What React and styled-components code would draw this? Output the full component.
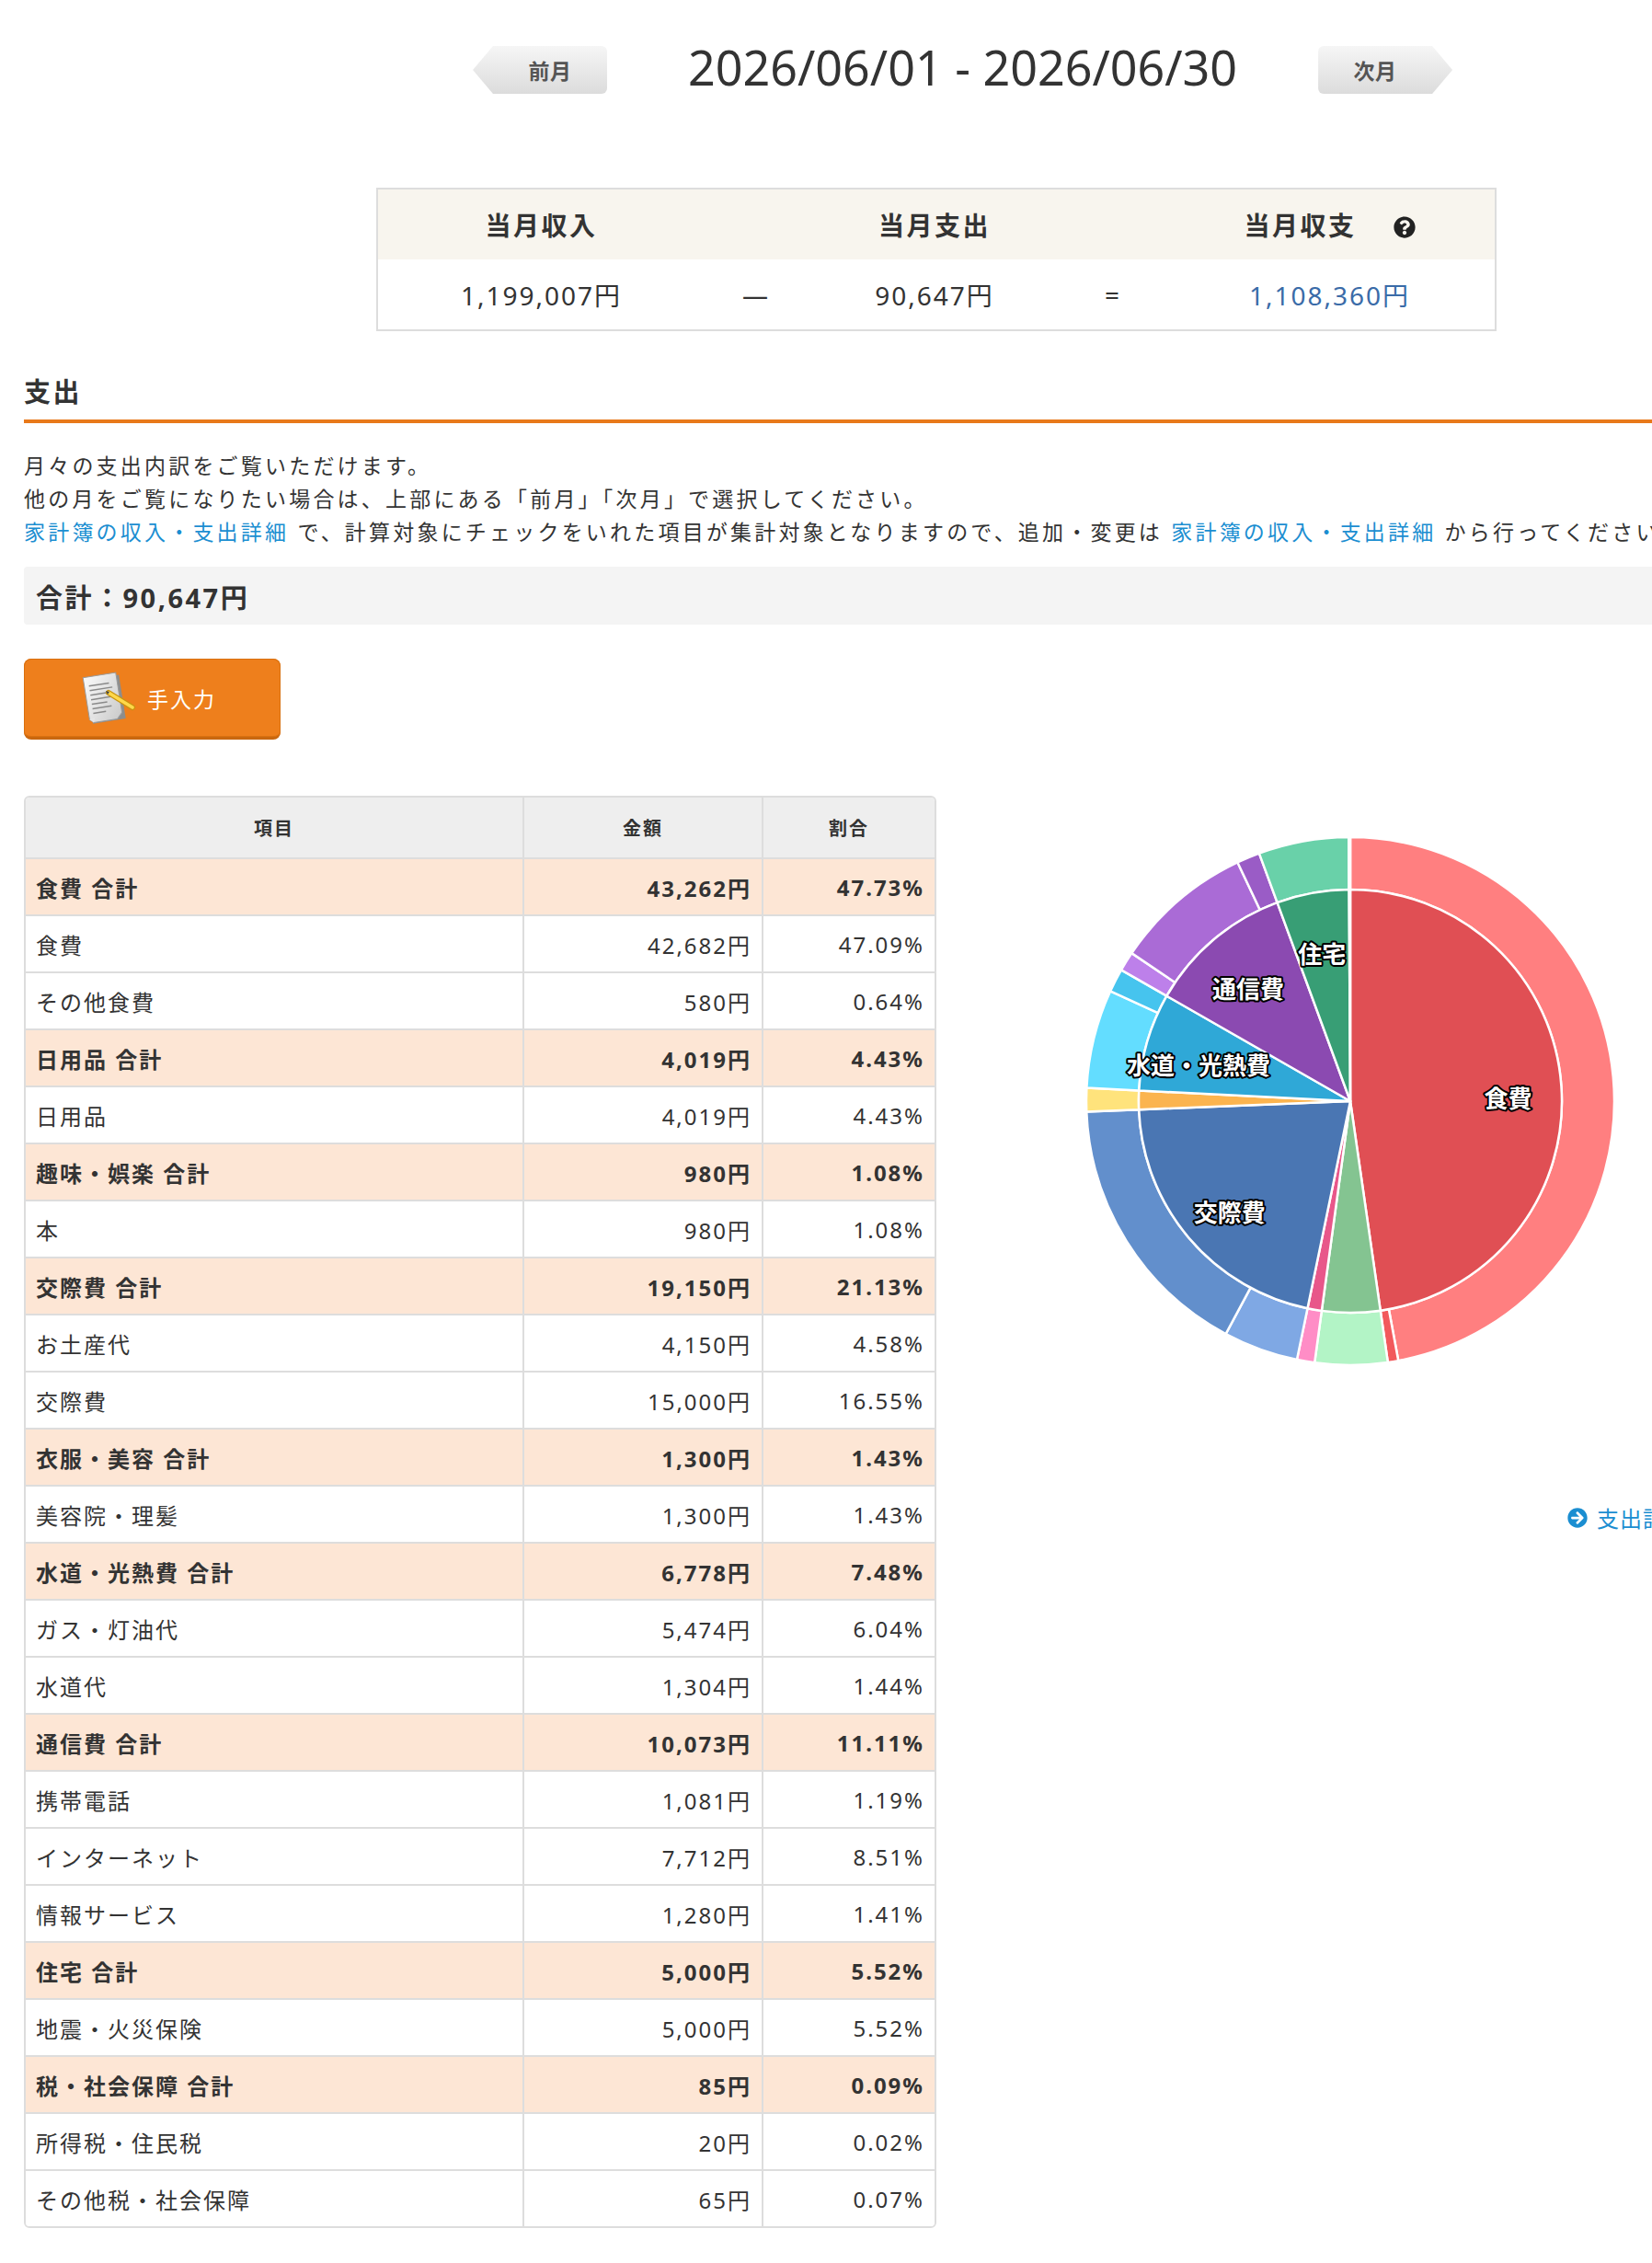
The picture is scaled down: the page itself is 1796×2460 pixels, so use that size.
import React from 'react';
import styled, { createGlobalStyle } from 'styled-components';
import { FaQuestionCircle, FaArrowCircleRight } from 'react-icons/fa';

const GlobalStyle = createGlobalStyle`
  body {
    margin: 0;
    background: #fff;
    color: #333;
    font-family: "Noto Sans", "Noto Sans CJK JP", sans-serif;
    overflow-x: hidden;
  }
`;

const groups = [
  { name: '食費', total: 43262, pct: '47.73%', color: '#e04f54', items: [
    { name: '食費', amount: 42682, pct: '47.09%', color: '#ff7f80' },
    { name: 'その他食費', amount: 580, pct: '0.64%', color: '#f2595c' },
  ] },
  { name: '日用品', total: 4019, pct: '4.43%', color: '#84c491', items: [
    { name: '日用品', amount: 4019, pct: '4.43%', color: '#b3f4c6' },
  ] },
  { name: '趣味・娯楽', total: 980, pct: '1.08%', color: '#e8578a', items: [
    { name: '本', amount: 980, pct: '1.08%', color: '#ff8dc6' },
  ] },
  { name: '交際費', total: 19150, pct: '21.13%', color: '#4a76b3', items: [
    { name: 'お土産代', amount: 4150, pct: '4.58%', color: '#7fa8e4' },
    { name: '交際費', amount: 15000, pct: '16.55%', color: '#628fcc' },
  ] },
  { name: '衣服・美容', total: 1300, pct: '1.43%', color: '#fbb44f', items: [
    { name: '美容院・理髪', amount: 1300, pct: '1.43%', color: '#ffe37c' },
  ] },
  { name: '水道・光熱費', total: 6778, pct: '7.48%', color: '#2fa8d7', items: [
    { name: 'ガス・灯油代', amount: 5474, pct: '6.04%', color: '#63ddff' },
    { name: '水道代', amount: 1304, pct: '1.44%', color: '#46c4ee' },
  ] },
  { name: '通信費', total: 10073, pct: '11.11%', color: '#8b4ab1', items: [
    { name: '携帯電話', amount: 1081, pct: '1.19%', color: '#bd80ea' },
    { name: 'インターネット', amount: 7712, pct: '8.51%', color: '#aa6bd6' },
    { name: '情報サービス', amount: 1280, pct: '1.41%', color: '#9a5cc6' },
  ] },
  { name: '住宅', total: 5000, pct: '5.52%', color: '#389e75', items: [
    { name: '地震・火災保険', amount: 5000, pct: '5.52%', color: '#69d1a9' },
  ] },
  { name: '税・社会保障', total: 85, pct: '0.09%', color: '#9e9e9e', items: [
    { name: '所得税・住民税', amount: 20, pct: '0.02%', color: '#c4c4c4' },
    { name: 'その他税・社会保障', amount: 65, pct: '0.07%', color: '#b0b0b0' },
  ] },
];

const yen = (n) => `${n.toLocaleString('ja-JP')}円`;

const Page = styled.div`
  width: 1810px;
  padding: 0 0 40px 26px;
`;

const Nav = styled.div`
  display: flex;
  align-items: center;
  gap: 88px;
  padding-top: 50px;
  margin-left: 488px;
`;

const NavButton = styled.a`
  display: flex;
  align-items: center;
  justify-content: center;
  width: 146px;
  height: 52px;
  box-sizing: border-box;
  padding: ${(p) => (p.$dir === 'prev' ? '0 0 0 22px' : '0 22px 0 0')};
  background: linear-gradient(#f6f6f6, #dcdcdc);
  border-radius: ${(p) => (p.$dir === 'prev' ? '0 6px 6px 0' : '6px 0 0 6px')};
  clip-path: ${(p) =>
    p.$dir === 'prev'
      ? 'polygon(0 50%, 22px 0, 100% 0, 100% 100%, 22px 100%)'
      : 'polygon(0 0, calc(100% - 22px) 0, 100% 50%, calc(100% - 22px) 100%, 0 100%)'};
  color: #555;
  font-size: 23px;
  font-weight: 600;
  letter-spacing: 0.5px;
  cursor: pointer;
`;

const DateRange = styled.div`
  font-size: 52px;
  line-height: 52px;
  color: #333;
  white-space: nowrap;
  margin-top: -6px;
`;

const SummaryTable = styled.table`
  margin: 102px 0 0 383px;
  width: 1218px;
  border-collapse: collapse;
  table-layout: fixed;
  border: 2px solid #ddd;
`;

const SumTh = styled.th`
  height: 76px;
  background: #f8f5ee;
  font-size: 28px;
  letter-spacing: 2.5px;
  font-weight: 700;
  color: #333;
  text-align: center;
  padding: 0;
`;

const SumTd = styled.td`
  height: 76px;
  font-size: 28px;
  letter-spacing: 2px;
  text-align: center;
  color: ${(p) => (p.$blue ? '#3a6ba8' : '#333')};
  padding: 0;
`;

const Help = styled(FaQuestionCircle)`
  margin-left: 40px;
  vertical-align: -3px;
  font-size: 24px;
  color: #222;
`;

const SectionTitle = styled.h2`
  margin: 46px 0 0;
  padding-bottom: 10px;
  font-size: 29px;
  line-height: 40px;
  letter-spacing: 2.5px;
  font-weight: 700;
  border-bottom: 4px solid #e8791a;
`;

const Lead = styled.div`
  margin-top: 28px;
  font-size: 23px;
  line-height: 36px;
  letter-spacing: 3.2px;
  color: #333;
  white-space: nowrap;
`;

const TextLink = styled.a`
  color: #1b8ed1;
  text-decoration: none;
`;

const TotalBox = styled.div`
  margin-top: 20px;
  height: 63px;
  display: flex;
  align-items: center;
  padding-left: 13px;
  background: #f4f4f4;
  border-radius: 4px 0 0 4px;
  font-size: 29px;
  font-weight: 700;
  letter-spacing: 2.5px;
`;

const InputButton = styled.button`
  margin-top: 37px;
  width: 279px;
  height: 88px;
  display: flex;
  align-items: center;
  justify-content: center;
  gap: 10px;
  padding: 0 8px 0 0;
  background: #ee7f1c;
  border: none;
  border-bottom: 3px solid #c9670f;
  border-radius: 8px;
  box-shadow: 0 0 0 1px #d9700f inset;
  color: #fff;
  font-family: inherit;
  font-size: 23px;
  letter-spacing: 2px;
  cursor: pointer;
`;

const MainRow = styled.div`
  display: flex;
  align-items: flex-start;
  margin-top: 61px;
`;

const DetailTable = styled.table`
  width: 992px;
  flex: none;
  border-collapse: separate;
  border-spacing: 0;
  table-layout: fixed;
  border: 2px solid #ddd;
  border-radius: 6px;
  overflow: hidden;
`;

const Th = styled.th`
  height: 65px;
  padding: 0;
  background: #eee;
  font-size: 20px;
  letter-spacing: 2px;
  font-weight: 700;
  text-align: center;
  border-right: 2px solid #ddd;
  &:last-child { border-right: none; }
`;

const Tr = styled.tr`
  background: ${(p) => (p.$group ? '#fde6d5' : '#fff')};
  font-weight: ${(p) => (p.$group ? 700 : 400)};
`;

const Td = styled.td`
  height: 60px;
  padding: ${(p) => (p.$right ? '0 11px 0 0' : '0 0 0 11px')};
  text-align: ${(p) => (p.$right ? 'right' : 'left')};
  font-size: 24px;
  letter-spacing: 2px;
  color: #333;
  border-top: 2px solid #ddd;
  border-right: 2px solid #ddd;
  white-space: nowrap;
  &:last-child { border-right: none; }
`;

const ChartCol = styled.div`
  flex: 1;
  display: flex;
  flex-direction: column;
  padding-left: 160px;
`;

const ChartWrap = styled.div`
  margin-top: 42px;
  width: 580px;
  height: 580px;
`;

const PieLabel = styled.text`
  font-size: 26px;
  font-weight: 700;
  fill: #fff;
  stroke: #000;
  stroke-width: 4px;
  paint-order: stroke;
  stroke-linejoin: round;
  font-family: "Noto Sans CJK JP", sans-serif;
`;

const MoreLink = styled.a`
  align-self: flex-end;
  margin-top: 145px;
  display: flex;
  align-items: center;
  gap: 10px;
  color: #1b8ed1;
  font-size: 24px;
  letter-spacing: 1px;
  text-decoration: none;
  white-space: nowrap;
  svg { font-size: 22px; }
`;

const NoteIcon = () => (
  <svg width="62" height="60" viewBox="0 0 62 60">
    <defs>
      <linearGradient id="paper" x1="0" y1="0" x2="1" y2="1">
        <stop offset="0" stopColor="#fbfbfb" />
        <stop offset="1" stopColor="#c9c9c9" />
      </linearGradient>
    </defs>
    <g transform="rotate(-9 28 30)">
      <rect x="9" y="7" width="36" height="48" fill="#8d8d8d" />
      <path d="M6 4h36v44l-6 6H10l-4-4z" fill="url(#paper)" stroke="#9b9b9b" />
      <path d="M6 50l4 4 2-5z" fill="#e6e6e6" />
      <path d="M11 14h22M11 19h25M11 24h19M11 29h23M11 34h17M11 39h21M11 44h14" stroke="#8a8a8a" strokeWidth="1.5" />
    </g>
    <path d="M30 24l26 16" stroke="#c9940f" strokeWidth="6" strokeLinecap="round" />
    <path d="M30 24l26 16" stroke="#ffd84a" strokeWidth="3.5" strokeLinecap="round" />
    <path d="M27 22l4 1-2 3z" fill="#444" />
  </svg>
);

const point = (r, a) => [290 + r * Math.sin(a), 290 - r * Math.cos(a)];

const arc = (r0, r1, a0, a1) => {
  const large = a1 - a0 > Math.PI ? 1 : 0;
  const [x1, y1] = point(r1, a0);
  const [x2, y2] = point(r1, a1);
  if (r0 === 0) {
    return `M290 290L${x1} ${y1}A${r1} ${r1} 0 ${large} 1 ${x2} ${y2}Z`;
  }
  const [x3, y3] = point(r0, a1);
  const [x4, y4] = point(r0, a0);
  return `M${x1} ${y1}A${r1} ${r1} 0 ${large} 1 ${x2} ${y2}L${x3} ${y3}A${r0} ${r0} 0 ${large} 0 ${x4} ${y4}Z`;
};

const Pie = () => {
  const total = groups.reduce((s, g) => s + g.total, 0);
  const inner = [];
  const outer = [];
  const labels = [];
  let acc = 0;
  groups.forEach((g) => {
    const a0 = (acc / total) * Math.PI * 2;
    const a1 = ((acc + g.total) / total) * Math.PI * 2;
    inner.push(<path key={g.name} d={arc(0, 230, a0, a1)} fill={g.color} />);
    if (g.total / total >= 0.05) {
      const [lx, ly] = point(172, (a0 + a1) / 2);
      labels.push(
        <PieLabel key={g.name} x={lx} y={ly + 8} textAnchor="middle" dominantBaseline="central">
          {g.name}
        </PieLabel>
      );
    }
    let sub = acc;
    g.items.forEach((it) => {
      const b0 = (sub / total) * Math.PI * 2;
      const b1 = ((sub + it.amount) / total) * Math.PI * 2;
      outer.push(<path key={g.name + it.name} d={arc(230, 287, b0, b1)} fill={it.color} />);
      sub += it.amount;
    });
    acc += g.total;
  });
  return (
    <svg width="580" height="580" viewBox="0 0 580 580">
      <g stroke="#fff" strokeWidth="2.5" strokeLinejoin="round">
        {outer}
        {inner}
      </g>
      {labels}
    </svg>
  );
};

export default function App() {
  return (
    <Page>
      <GlobalStyle />
      <Nav>
        <NavButton $dir="prev">前月</NavButton>
        <DateRange>2026/06/01 - 2026/06/30</DateRange>
        <NavButton $dir="next">次月</NavButton>
      </Nav>

      <SummaryTable>
        <colgroup>
          <col style={{ width: 356 }} />
          <col style={{ width: 112 }} />
          <col style={{ width: 276 }} />
          <col style={{ width: 112 }} />
          <col />
        </colgroup>
        <thead>
          <tr>
            <SumTh>当月収入</SumTh>
            <SumTh />
            <SumTh>当月支出</SumTh>
            <SumTh />
            <SumTh>当月収支<Help /></SumTh>
          </tr>
        </thead>
        <tbody>
          <tr>
            <SumTd>1,199,007円</SumTd>
            <SumTd>—</SumTd>
            <SumTd>90,647円</SumTd>
            <SumTd>=</SumTd>
            <SumTd $blue>1,108,360円</SumTd>
          </tr>
        </tbody>
      </SummaryTable>

      <SectionTitle>支出</SectionTitle>
      <Lead>
        月々の支出内訳をご覧いただけます。<br />
        他の月をご覧になりたい場合は、上部にある「前月」「次月」で選択してください。<br />
        <TextLink>家計簿の収入・支出詳細</TextLink> で、計算対象にチェックをいれた項目が集計対象となりますので、追加・変更は <TextLink>家計簿の収入・支出詳細</TextLink> から行ってください。
      </Lead>

      <TotalBox>合計：90,647円</TotalBox>

      <InputButton>
        <NoteIcon />
        手入力
      </InputButton>

      <MainRow>
        <DetailTable>
          <colgroup>
            <col style={{ width: 542 }} />
            <col style={{ width: 260 }} />
            <col />
          </colgroup>
          <thead>
            <tr>
              <Th>項目</Th>
              <Th>金額</Th>
              <Th>割合</Th>
            </tr>
          </thead>
          <tbody>
            {groups.map((g) => (
              <React.Fragment key={g.name}>
                <Tr $group>
                  <Td>{g.name} 合計</Td>
                  <Td $right>{yen(g.total)}</Td>
                  <Td $right>{g.pct}</Td>
                </Tr>
                {g.items.map((it) => (
                  <Tr key={it.name}>
                    <Td>{it.name}</Td>
                    <Td $right>{yen(it.amount)}</Td>
                    <Td $right>{it.pct}</Td>
                  </Tr>
                ))}
              </React.Fragment>
            ))}
          </tbody>
        </DetailTable>

        <ChartCol>
          <ChartWrap>
            <Pie />
          </ChartWrap>
          <MoreLink>
            <FaArrowCircleRight />
            支出詳細
          </MoreLink>
        </ChartCol>
      </MainRow>
    </Page>
  );
}
